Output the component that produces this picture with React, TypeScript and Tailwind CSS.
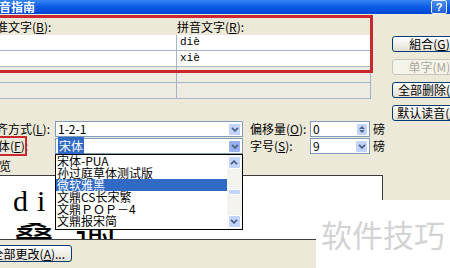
import React from 'react';

const Chevron = ({ up = false, color = '#4D6185' }: { up?: boolean; color?: string }) => (
  <svg width="8" height="5" viewBox="0 0 8 5" className={up ? 'rotate-180' : ''}>
    <path d="M1 0.8 L4 3.8 L7 0.8" fill="none" stroke={color} strokeWidth="1.8" />
  </svg>
);

const ArrowBox = ({ up = false, active = false }: { up?: boolean; active?: boolean }) => (
  <div
    className={`w-[13px] h-[13px] mr-[1px] rounded-[2px] border border-white flex items-center justify-center ${
      active ? 'bg-[#98B1EE]' : 'bg-[#C3D4FB]'
    }`}
  >
    <Chevron up={up} />
  </div>
);

const Select = ({ value, width, active = false }: { value: React.ReactNode; width: string; active?: boolean }) => (
  <div className={`${width} shrink-0 h-[16px] border border-[#7F9DB9] bg-white flex items-center`}>
    <div className="flex-1 pl-[2px] leading-[14px] whitespace-nowrap">{value}</div>
    <ArrowBox active={active} />
  </div>
);

const Label = ({ pre, k, width, className = '' }: { pre: string; k: string; width?: string; className?: string }) => (
  <div className={`${width ?? ''} shrink-0 whitespace-nowrap leading-[14px] ${className}`}>
    {pre}(<u>{k}</u>):
  </div>
);

const XpButton = ({ children, disabled = false }: { children: React.ReactNode; disabled?: boolean }) => (
  <div
    className={`w-[75px] h-[16px] shrink-0 rounded-[3px] border flex items-center justify-center whitespace-nowrap leading-[14px] ${
      disabled
        ? 'border-[#C9C7BA] bg-[#F5F4EA] text-[#ACA899]'
        : 'border-[#003C74] bg-linear-to-b from-[#FFFFFF] to-[#E3E0D4]'
    }`}
  >
    {children}
  </div>
);

const fonts = ['宋体-PUA', '孙过庭草体测试版', '微软雅黑', '文鼎CS长宋繁', '文鼎ＰＯＰ－4', '文鼎报宋简'];

export default function App() {
  return (
    <div className="relative w-[450px] h-[268px] overflow-hidden bg-[#ECE9D8] text-[12px] text-black font-['Noto_Sans_CJK_SC',sans-serif]">
      {/* title bar */}
      <div className="h-[14px] flex items-center justify-between bg-linear-to-b from-[#3584F2] via-[#0A5AE6] to-[#0048D4]">
        <span className="-ml-[13px] text-white font-bold leading-[14px]">拼音指南</span>
        <div className="mr-[3px] w-[16px] h-[14px] rounded-[2px] border border-[#E8EEFB] bg-linear-to-b from-[#4F8DF0] to-[#1F5FD6] text-white font-bold text-[11px] leading-[12px] flex items-center justify-center font-['Liberation_Sans',sans-serif]">
          ?
        </div>
      </div>

      <div className="flex">
        {/* base / ruby table */}
        <div className="w-[371px] shrink-0">
          <div className="h-[21px] pt-[6px] flex">
            <Label pre="基准文字" k="B" width="w-[177px]" className="-ml-[16px]" />
            <Label pre="拼音文字" k="R" className="ml-[16px]" />
          </div>
          <div className="border-r border-[#9DB0C8]">
            {[
              { ruby: 'diè', on: true },
              { ruby: 'xiè', on: true },
              { ruby: '', on: false },
              { ruby: '', on: false },
            ].map((r, i) => (
              <div
                key={i}
                className={`h-[16px] flex border-b border-[#A6B5CA] ${r.on ? 'bg-white' : 'bg-[#EEEBE1]'}`}
              >
                <div className="w-[177px] border-r border-[#A6B5CA]" />
                <div className="pl-[3px] leading-[15px] font-['Liberation_Mono',monospace] text-[11px]">{r.ruby}</div>
              </div>
            ))}
          </div>
        </div>

        {/* buttons */}
        <div className="ml-[21px] pt-[22px] flex flex-col gap-[7px] shrink-0">
          <XpButton>組合(<u>G</u>)</XpButton>
          <XpButton disabled>单字(M)</XpButton>
          <XpButton>全部删除(<u>V</u>)</XpButton>
          <XpButton>默认读音(<u>D</u>)</XpButton>
        </div>
      </div>

      {/* options */}
      <div className="flex flex-col gap-[1px]">
        <div className="flex h-[16px] items-center">
          <Label pre="对齐方式" k="L" width="w-[71px]" className="-ml-[16px]" />
          <Select value="1-2-1" width="w-[188px]" />
          <Label pre="偏移量" k="O" width="w-[60px]" className="ml-[7px]" />
          <div className="w-[60px] shrink-0 h-[16px] border border-[#7F9DB9] bg-white flex items-center">
            <div className="flex-1 pl-[2px] leading-[14px]">0</div>
            <div className="w-[12px] h-[13px] mr-[1px] rounded-[2px] bg-[#C3D4FB] border border-white flex flex-col items-center justify-center gap-[1px]">
              <svg width="6" height="3" viewBox="0 0 6 3"><path d="M0 3 L3 0 L6 3Z" fill="#4D6185" /></svg>
              <svg width="6" height="3" viewBox="0 0 6 3"><path d="M0 0 L3 3 L6 0Z" fill="#4D6185" /></svg>
            </div>
          </div>
          <span className="ml-[3px] leading-[14px]">磅</span>
        </div>
        <div className="flex h-[16px] items-center">
          <Label pre="字体" k="F" width="w-[69px]" className="-ml-[14px]" />
          <Select
            value={<span className="bg-[#316AC5] text-white px-[1px]">宋体</span>}
            width="w-[188px]"
            active
          />
          <Label pre="字号" k="S" width="w-[60px]" className="ml-[7px]" />
          <Select value="9" width="w-[60px]" />
          <span className="ml-[3px] leading-[14px]">磅</span>
        </div>
      </div>

      <div className="h-[21px] pt-[5px] -ml-[13px] leading-[14px]">预览</div>

      {/* preview */}
      <div className="-ml-[2px] w-[385px] h-[65px] border border-[#3C3C3C] bg-white overflow-hidden pl-[14px]">
        <div className="pt-[10px] h-[47px] text-[30px] leading-[30px] tracking-[9px] font-['Liberation_Serif',serif]">diè</div>
        <div className="h-[16px] overflow-hidden">
          <div className="-mt-[5px] text-[42px] leading-[42px] tracking-[20px] font-['Liberation_Serif','Noto_Sans_CJK_SC',serif]">
            叠谢
          </div>
        </div>
      </div>

      <div className="mt-[5px] -ml-[30px] w-[102px] h-[17px] rounded-[3px] border border-[#003C74] bg-linear-to-b from-[#FFFFFF] to-[#E3E0D4] flex items-center justify-end pr-[6px] leading-[14px] whitespace-nowrap">
        全部更改(<u>A</u>)...
      </div>

      {/* red annotation boxes */}
      <div className="absolute left-[-3px] top-[15px] w-[376px] h-[58px] border-[3px] border-[#C8282E]" />
      <div className="absolute left-[-3px] top-[136px] w-[30px] h-[20px] border-2 border-[#C8282E]" />

      {/* font dropdown list */}
      <div className="absolute left-[55px] top-[154px] w-[188px] h-[76px] border border-black bg-white flex">
        <div className="flex-1">
          {fonts.map((f) => (
            <div
              key={f}
              className={`h-[12px] leading-[12px] pl-[1px] whitespace-nowrap ${
                f === '微软雅黑' ? 'bg-[#316AC5] text-white' : ''
              }`}
            >
              {f}
            </div>
          ))}
        </div>
        <div className="w-[15px] bg-[#F4F3EE] flex flex-col items-center justify-between py-[1px]">
          <ArrowBox up />
          <div className="w-[13px] h-[6px] rounded-[2px] bg-[#C3D4FB] border border-white mt-[20px]" />
          <div className="flex-1" />
          <ArrowBox />
        </div>
      </div>

      {/* watermark */}
      <div className="absolute left-[316px] top-[200px] right-0 bottom-0 bg-white" />
      <div className="absolute left-[321px] top-[214px] text-[31px] leading-[40px] text-[#D3D3D3] whitespace-nowrap">
        软件技巧
      </div>
    </div>
  );
}
